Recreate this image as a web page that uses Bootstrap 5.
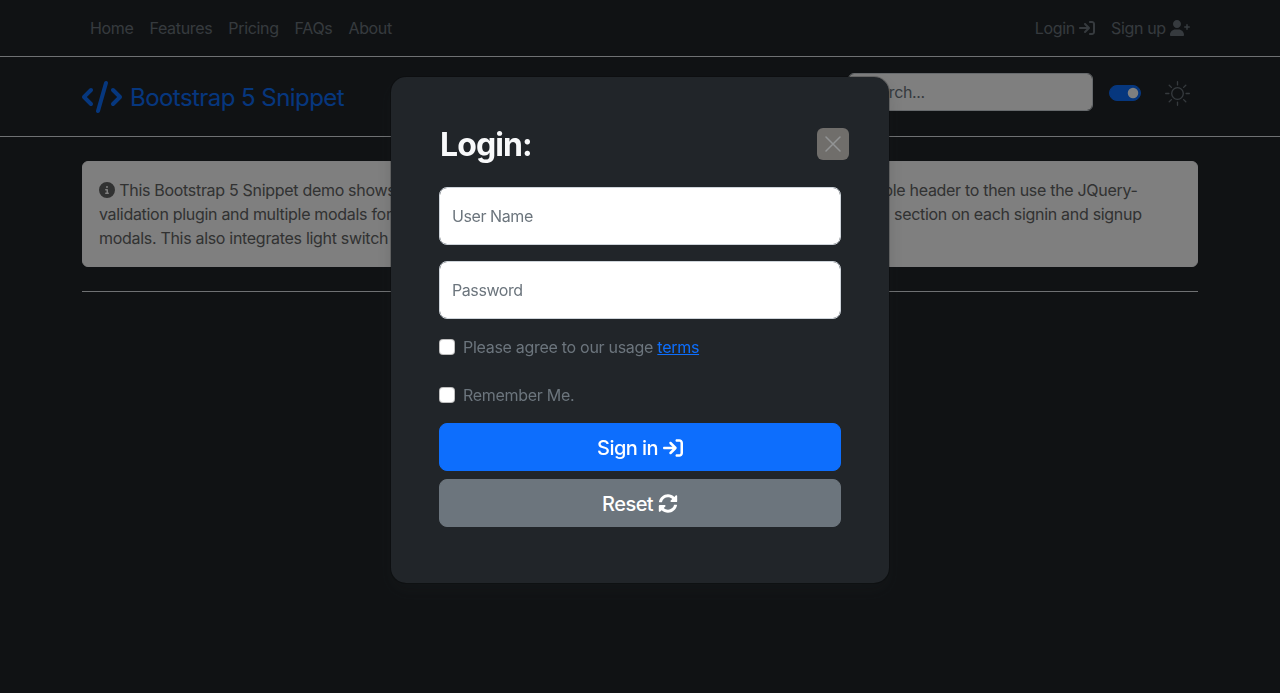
<!DOCTYPE html>
<html lang="en">
<head>
<meta charset="utf-8">
<meta name="viewport" content="width=device-width, initial-scale=1">
<title>Bootstrap 5 Snippet</title>
<link href="https://cdn.jsdelivr.net/npm/bootstrap@5.3.0/dist/css/bootstrap.min.css" rel="stylesheet">
<style>
body{font-family:Inter,"Liberation Sans",sans-serif;background:#212529;letter-spacing:-.021em;overflow:hidden}
input,button{letter-spacing:inherit}
.fa-ico{height:1em;width:auto;fill:currentColor;vertical-align:-.125em;overflow:visible}
.line{border-bottom:1px solid #dee2e6}
.page-nav .nav-link{color:#6c757d}
.head-row{height:47px}
.brand-text{font-size:1.5rem;letter-spacing:-.023em;padding-top:2px}
.search-box{width:245px}
.search-box::placeholder{color:#6c757d}
.theme-switch{margin-right:24px;padding-top:8px}
.sun{margin:8px 8px 0 0}
.note{background:#fefefe;border:1px solid #fdfdfe;color:#636464;border-radius:.375rem;letter-spacing:-.019em}
.mid{display:inline-block;white-space:nowrap;overflow:hidden;vertical-align:top}
.mid-a{width:472px}
.mid-b{width:494px}
.modal-content{background-color:#212529;border-color:rgba(0,0,0,.2)}
.modal-header h1{letter-spacing:-.028em;padding:1px 0 0 1px;margin-bottom:-1px!important}
.dismiss{width:32px;height:32px;background:#706e6b;color:#929495;margin-right:-8px}
.form-control{background-color:#fff;border-color:#ced4da}
.form-floating>label{color:#6c757d;letter-spacing:-.026em}
.form-check-input:not(:checked){border-color:rgba(0,0,0,.25);background-color:#fff}
.form-check-label{color:#6c757d;letter-spacing:-.018em}
.form-check-label a{color:#0d6efd}
.modal .btn{--bs-btn-border-radius:.5rem;font-weight:500;letter-spacing:-.027em;padding-top:9px;padding-bottom:7px}
</style>
</head>
<body>
<nav class="page-nav py-2 line">
  <div class="container d-flex">
    <ul class="nav me-auto">
      <li><a href="#" class="nav-link px-2">Home</a></li>
      <li><a href="#" class="nav-link px-2">Features</a></li>
      <li><a href="#" class="nav-link px-2">Pricing</a></li>
      <li><a href="#" class="nav-link px-2">FAQs</a></li>
      <li><a href="#" class="nav-link px-2">About</a></li>
    </ul>
    <ul class="nav">
      <li><a href="#" class="nav-link px-2">Login <svg class="fa-ico" viewBox="0 0 512 512"><use href="#i-login"/></svg></a></li>
      <li><a href="#" class="nav-link px-2">Sign up <svg class="fa-ico" viewBox="0 0 640 512"><path d="M224 256c70.700 0 128-57.310 128-128S294.700 0 224 0C153.300 0 96 57.300 96 128S153.300 256 224 256zM274.700 304H173.300C77.610 304 0 381.600 0 477.300C0 496.500 15.520 512 34.660 512h378.700C432.500 512 448 496.500 448 477.300C448 381.600 370.400 304 274.700 304zM616 200h-48v-48C568 138.800 557.300 128 544 128s-24 10.750-24 24v48h-48C458.800 200 448 210.800 448 224C448 237.300 458.800 248 472 248h48v48C520 309.300 530.800 320 544 320s24-10.750 24-24v-48h48C629.300 248 640 237.300 640 224C640 210.800 629.300 200 616 200z"/></svg></a></li>
    </ul>
  </div>
</nav>
<header class="py-3 mb-4 line">
  <div class="container d-flex head-row">
    <a href="#" class="d-flex align-items-center me-auto text-primary text-decoration-none">
      <svg class="me-2" width="40" height="32" viewBox="0 0 640 512" fill="currentColor"><path d="M392.800 1.200c-17-4.900-34.700 5-39.600 22l-128 448c-4.900 17 5 34.700 22 39.600s34.700-5 39.600-22l128-448c4.900-17-5-34.700-22-39.600zm80.600 120.100c-12.500 12.500-12.500 32.800 0 45.300L562.700 256l-89.400 89.400c-12.500 12.500-12.500 32.800 0 45.300s32.800 12.500 45.300 0l112-112c12.500-12.500 12.500-32.800 0-45.300l-112-112c-12.500-12.500-32.800-12.500-45.300 0zm-306.700 0c-12.500-12.500-32.800-12.500-45.300 0l-112 112c-12.500 12.500-12.500 32.800 0 45.300l112 112c12.500 12.500 32.800 12.500 45.300 0s12.500-32.800 0-45.300L77.300 256l89.400-89.400c12.500-12.500 12.500-32.800 0-45.300z"/></svg>
      <span class="brand-text">Bootstrap 5 Snippet</span>
    </a>
    <form><input type="search" class="form-control search-box" placeholder="Search..." aria-label="Search"></form>
    <div class="form-check form-switch d-flex ms-3 ps-0 mb-0 theme-switch"><input class="form-check-input ms-0" type="checkbox" role="switch" checked aria-label="Theme"></div>
    <svg class="sun" width="25" height="25" viewBox="0 0 25 25" fill="none" stroke="#6c757d" stroke-width="1.300" stroke-linecap="round"><circle cx="12.500" cy="12.500" r="5.800"/><path d="M12.500.7v3.200M12.500 21.100v3.200M.7 12.500h3.200M21.100 12.500h3.200M4.200 4.200l2.200 2.200M18.600 18.600l2.200 2.200M4.200 20.800l2.200-2.200M18.600 6.400l2.200-2.200"/></svg>
  </div>
</header>
<main class="container">
  <div class="note p-3 text-nowrap">
    <svg class="fa-ico" viewBox="0 0 512 512"><path d="M256 512A256 256 0 1 0 256 0a256 256 0 1 0 0 512zM216 336h24V272H216c-13.300 0-24-10.700-24-24s10.700-24 24-24h48c13.300 0 24 10.700 24 24v88h8c13.300 0 24 10.700 24 24s-10.700 24-24 24H216c-13.300 0-24-10.700-24-24s10.700-24 24-24zm40-208a32 32 0 1 1 0 64 32 32 0 1 1 0-64z"/></svg>
    This Bootstrap 5 Snippet demo shows <span class="mid mid-a">how to create a simple navigation bar and a double</span>sible header to then use the JQuery-<br>
    validation plugin and multiple modals for <span class="mid mid-b">signing in and signing up, along with a validated form</span> section on each signin and signup<br>
    modals. This also integrates light switch for dark mode.
  </div>
  <div class="line mt-4"></div>
</main>

<div class="modal-backdrop show"></div>
<div class="modal d-block py-5" tabindex="-1" role="dialog">
  <div class="modal-dialog" role="document">
    <div class="modal-content rounded-4 shadow">
      <div class="modal-header p-5 pb-4 border-bottom-0">
        <h1 class="fw-bold mb-0 fs-2 text-light">Login:</h1>
        <button type="button" class="dismiss border-0 rounded p-2 d-flex" aria-label="Close"><svg width="16" height="16" viewBox="0 0 16 16" stroke="currentColor" stroke-width="1.500" stroke-linecap="round"><path d="M1 1l14 14M15 1L1 15"/></svg></button>
      </div>
      <div class="modal-body p-5 pt-0">
        <form>
          <div class="form-floating mb-3"><input type="text" class="form-control rounded-3" id="user" placeholder="User Name"><label for="user">User Name</label></div>
          <div class="form-floating mb-3"><input type="password" class="form-control rounded-3" id="pass" placeholder="Password"><label for="pass">Password</label></div>
          <div class="form-check mb-4"><input class="form-check-input" type="checkbox" id="agree"><label class="form-check-label" for="agree">Please agree to our usage <a href="#">terms</a></label></div>
          <div class="form-check mb-3"><input class="form-check-input" type="checkbox" id="rem"><label class="form-check-label" for="rem">Remember Me.</label></div>
          <button class="w-100 mb-2 btn btn-lg btn-primary" type="button">Sign in <svg class="fa-ico" viewBox="0 0 512 512"><use href="#i-login"/></svg></button>
          <button class="w-100 mb-2 btn btn-lg btn-secondary" type="button">Reset <svg class="fa-ico" viewBox="-14 -2 540 540"><path d="M370.720 133.280C339.458 104.008 298.888 87.962 255.848 88c-77.458.068-144.328 53.178-162.791 126.850-1.344 5.363-6.122 9.150-11.651 9.150H24.103c-7.498 0-13.194-6.807-11.807-14.176C33.933 94.924 134.813 8 256 8c66.448 0 126.791 26.136 171.315 68.685L463.030 40.970C478.149 25.851 504 36.559 504 57.941V192c0 13.255-10.745 24-24 24H345.941c-21.382 0-32.090-25.851-16.971-40.971l41.750-41.749zM32 296h134.059c21.382 0 32.090 25.851 16.971 40.971l-41.750 41.750c31.262 29.273 71.835 45.319 114.876 45.280 77.418-.070 144.315-53.144 162.787-126.849 1.344-5.363 6.122-9.150 11.651-9.150h57.304c7.498 0 13.194 6.807 11.807 14.176C478.067 417.076 377.187 504 256 504c-66.448 0-126.791-26.136-171.315-68.685L48.970 471.030C33.851 486.149 8 475.441 8 454.059V320c0-13.255 10.745-24 24-24z"/></svg></button>
        </form>
      </div>
    </div>
  </div>
</div>
<svg width="0" height="0" class="d-none"><symbol id="i-login" viewBox="0 0 512 512"><path d="M352 96l64 0c17.700 0 32 14.300 32 32l0 256c0 17.700-14.300 32-32 32l-64 0c-17.700 0-32 14.300-32 32s14.300 32 32 32l64 0c53 0 96-43 96-96l0-256c0-53-43-96-96-96l-64 0c-17.700 0-32 14.300-32 32s14.300 32 32 32zm-9.400 182.600c12.500-12.500 12.500-32.800 0-45.300l-128-128c-12.500-12.500-32.800-12.500-45.300 0s-12.500 32.800 0 45.300L242.700 224 32 224c-17.700 0-32 14.300-32 32s14.300 32 32 32l210.700 0-73.400 73.400c-12.500 12.500-12.500 32.800 0 45.300s32.800 12.500 45.300 0l128-128z"/></symbol></svg>
<script src="https://cdn.jsdelivr.net/npm/bootstrap@5.3.0/dist/js/bootstrap.bundle.min.js"></script>
</body>
</html>
